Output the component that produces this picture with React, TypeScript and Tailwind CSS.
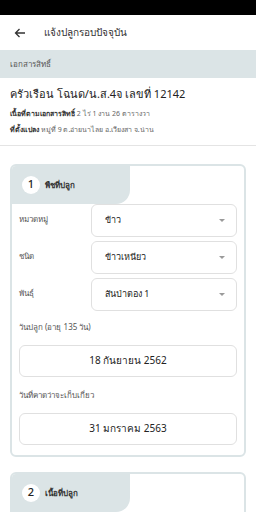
import React from 'react';

function Caret() {
  return (
    <svg width="6" height="3" viewBox="0 0 6 3" className="shrink-0">
      <path d="M0 0 L6 0 L3 3 Z" fill="#9a9a9a" />
    </svg>
  );
}

function SelectRow({ label, value }: { label: string; value: string }) {
  return (
    <div className="flex items-start">
      <div className="w-[79px] pl-[7px] pt-[9px] text-[8px] text-[#555]">{label}</div>
      <div className="flex h-[33px] flex-1 items-center justify-between rounded-[6px] border border-[#e0e0e0] bg-white pl-[13px] pr-[11px]">
        <span className="text-[9px] text-[#222]">{value}</span>
        <Caret />
      </div>
    </div>
  );
}

function DateBox({ value }: { value: string }) {
  return (
    <div className="flex h-[32px] items-center justify-center rounded-[6px] border border-[#e0e0e0] bg-white text-[10px] text-[#222]">
      {value}
    </div>
  );
}

function CardHeader({ n, title }: { n: string; title: string }) {
  return (
    <div className="flex h-[38px] w-[118px] items-center gap-[5px] rounded-br-[14px] bg-[#dbe4e6] pl-[10px]">
      <div className="flex h-[18px] w-[18px] items-center justify-center rounded-full bg-white text-[11px] font-medium text-[#222]">
        {n}
      </div>
      <span className="text-[8px] font-bold text-[#333]">{title}</span>
    </div>
  );
}

export default function App() {
  return (
    <div className="h-[512px] w-[256px] overflow-hidden bg-white" style={{ fontFamily: '"Noto Sans", "Liberation Sans", sans-serif' }}>
      <div className="h-[15px] bg-black" />

      <div className="flex h-[35px] items-center">
        <svg width="12" height="10" viewBox="0 0 12 10" className="ml-[14px]">
          <path d="M11 5 H1.5 M5.5 1 L1.5 5 L5.5 9" fill="none" stroke="#333" strokeWidth="1.3" />
        </svg>
        <span className="ml-[18px] text-[10px] text-[#333]">แจ้งปลูกรอบปัจจุบัน</span>
      </div>

      <div className="flex h-[28px] items-center bg-[#dbe4e6] px-[10px] text-[8px] text-[#555]">เอกสารสิทธิ์</div>

      <div className="border-b border-[#e4e4e4] px-[10px] pb-[9px] pt-[8px]">
        <div className="text-[11px] text-[#222]">ครัวเรือน โฉนด/น.ส.4จ เลขที่ 12142</div>
        <div className="mt-[6px] text-[7px] text-[#666]">
          <span className="font-bold text-[#333]">เนื้อที่ตามเอกสารสิทธิ์</span> 2 ไร่ 1 งาน 26 ตารางวา
        </div>
        <div className="mt-[6px] text-[7px] text-[#666]">
          <span className="font-bold text-[#333]">ที่ตั้งแปลง</span> หมู่ที่ 9 ต.อ่ายนาไลย อ.เวียงสา จ.น่าน
        </div>
      </div>

      <div className="mx-[10px] mt-[18px] overflow-hidden rounded-[6px] border-2 border-[#dbe4e6] pb-[10px]">
        <CardHeader n="1" title="พืชที่ปลูก" />
        <div className="flex flex-col gap-[4px] pr-[7px]">
          <SelectRow label="หมวดหมู่" value="ข้าว" />
          <SelectRow label="ชนิด" value="ข้าวเหนียว" />
          <SelectRow label="พันธุ์" value="สันป่าตอง 1" />
        </div>
        <div className="px-[7px]">
          <div className="mt-[10px] text-[8px] text-[#555]">วันปลูก (อายุ 135 วัน)</div>
          <div className="mt-[12px]">
            <DateBox value="18 กันยายน 2562" />
          </div>
          <div className="mt-[12px] text-[8px] text-[#555]">วันที่คาดว่าจะเก็บเกี่ยว</div>
          <div className="mt-[12px]">
            <DateBox value="31 มกราคม 2563" />
          </div>
        </div>
      </div>

      <div className="mx-[10px] mt-[15px] h-[60px] overflow-hidden rounded-[6px] border-2 border-[#dbe4e6]">
        <CardHeader n="2" title="เนื้อที่ปลูก" />
      </div>
    </div>
  );
}
